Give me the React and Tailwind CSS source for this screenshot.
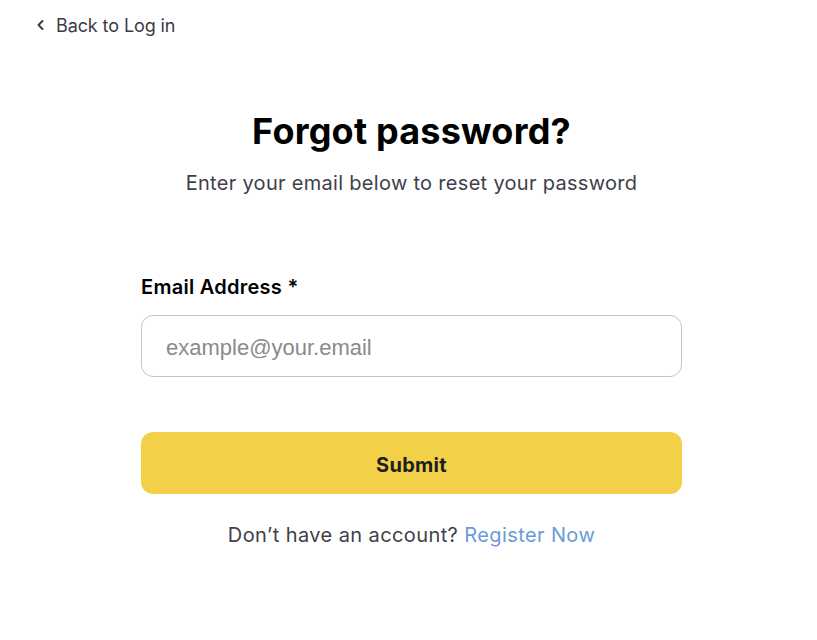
import React from "react";

export default function App() {
  const font = { fontFamily: "Inter, 'Liberation Sans', sans-serif" };
  return (
    <div className="min-h-[640px] w-full bg-white" style={font}>
      <div className="pt-[11px] pl-[36px]">
        <a href="#" className="flex h-[28px] items-center gap-[11px] text-[18px] text-[#3b3b46] tracking-[-0.1px]">
          <svg width="9" height="12" viewBox="0 0 9 12" fill="none">
            <path d="M6.5 2 L2.5 6 L6.5 10" stroke="#3b3b46" strokeWidth="2" strokeLinecap="round" strokeLinejoin="round" />
          </svg>
          <span>Back to Log in</span>
        </a>
      </div>
      <div className="pl-[6px]">
        <div className="mx-auto w-[541px]">
          <h1 className="mt-[70px] text-center text-[36px] leading-[44px] font-bold text-black tracking-[0.2px]">
            Forgot password?
          </h1>
          <p className="mt-[16px] text-center text-[20px] leading-[28px] text-[#3f3f4a] tracking-[0.3px]">
            Enter your email below to reset your password
          </p>
          <label className="mt-[76px] block text-[20px] leading-[28px] font-semibold text-black tracking-[0.27px]">
            Email Address *
          </label>
          <input
            type="email"
            placeholder="example@your.email"
            className="mt-[14px] block h-[62px] w-full rounded-[12px] border border-[#c4c4c4] px-[24px] pt-[3px] text-[22px] outline-none placeholder:text-[#8a8a8a]"
            style={{ fontFamily: "'Liberation Sans', Arial, sans-serif" }}
          />
          <button className="mt-[55px] flex h-[62px] w-full items-center justify-center rounded-[12px] bg-[#f2d149] pt-[3px] text-[20px] font-bold text-[#1e1e1e] tracking-[0.3px]">
            Submit
          </button>
          <p className="mt-[27px] text-center text-[20px] leading-[28px] text-[#3f3f4a] tracking-[0.4px]">
            Don’t have an account?{" "}
            <a href="#" className="text-[#6c9ad8]">Register Now</a>
          </p>
        </div>
      </div>
    </div>
  );
}
